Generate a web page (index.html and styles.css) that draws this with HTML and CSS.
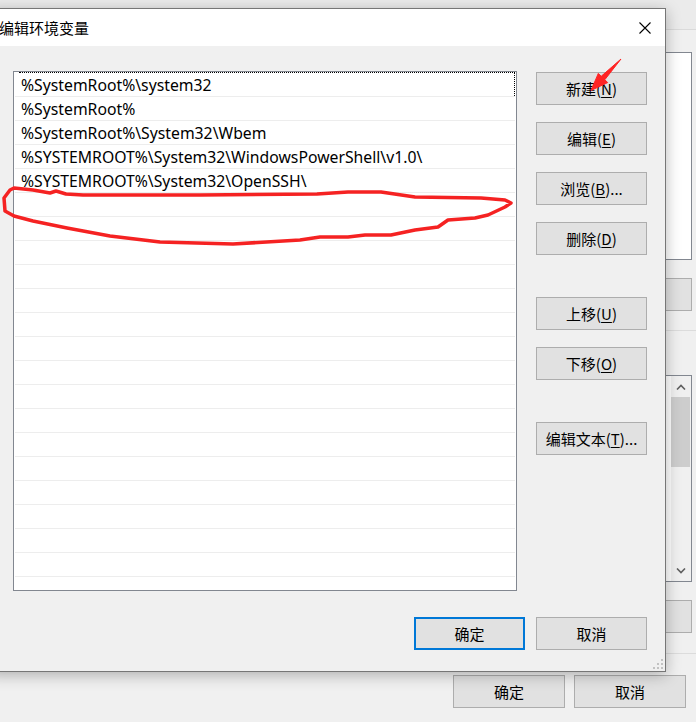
FILE: index.html
```html
<!DOCTYPE html>
<html lang="zh-CN">
<head>
<meta charset="utf-8">
<title>编辑环境变量</title>
<link rel="stylesheet" href="styles.css">
</head>
<body>
<div class="desktop">
  <div class="bg-window">
    <div class="bg-titlebar"></div>
    <div class="bg-list bg-list-top"></div>
    <div class="bg-btn"></div>
    <div class="bg-sep"></div>
    <div class="bg-list bg-list-bottom">
      <div class="scrollbar">
        <div class="sb-arrow">
          <svg width="10" height="6" viewBox="0 0 10 6"><path d="M1 5.5 L5 1.5 L9 5.5" fill="none" stroke="#606060" stroke-width="1.6"/></svg>
        </div>
        <div class="sb-thumb"></div>
        <div class="sb-track"></div>
        <div class="sb-arrow">
          <svg width="10" height="6" viewBox="0 0 10 6"><path d="M1 0.5 L5 4.5 L9 0.5" fill="none" stroke="#606060" stroke-width="1.6"/></svg>
        </div>
      </div>
    </div>
    <div class="bg-btn"></div>
    <div class="bg-sep"></div>
    <div class="bg-footer">
      <button class="btn">确定</button>
      <button class="btn">取消</button>
    </div>
  </div>

  <div class="dialog">
    <div class="titlebar">
      <span class="title">编辑环境变量</span>
      <span class="close">
        <svg width="12" height="12" viewBox="0 0 12 12"><path d="M0.5 0.5 L11.5 11.5 M11.5 0.5 L0.5 11.5" stroke="#000" stroke-width="1.1" fill="none"/></svg>
      </span>
    </div>
    <div class="dialog-body">
      <div class="main">
        <div class="listbox">
          <div class="row focused">%SystemRoot%\system32</div>
          <div class="row">%SystemRoot%</div>
          <div class="row">%SystemRoot%\System32\Wbem</div>
          <div class="row">%SYSTEMROOT%\System32\WindowsPowerShell\v1.0\</div>
          <div class="row">%SYSTEMROOT%\System32\OpenSSH\</div>
          <div class="row"></div>
          <div class="row"></div>
          <div class="row"></div>
          <div class="row"></div>
          <div class="row"></div>
          <div class="row"></div>
          <div class="row"></div>
          <div class="row"></div>
          <div class="row"></div>
          <div class="row"></div>
          <div class="row"></div>
          <div class="row"></div>
          <div class="row"></div>
          <div class="row"></div>
          <div class="row"></div>
          <div class="row"></div>
          <div class="row"></div>
        </div>
        <div class="side">
          <div class="group">
            <button class="btn">新建(<u>N</u>)</button>
            <button class="btn">编辑(<u>E</u>)</button>
            <button class="btn">浏览(<u>B</u>)...</button>
            <button class="btn">删除(<u>D</u>)</button>
          </div>
          <div class="group">
            <button class="btn">上移(<u>U</u>)</button>
            <button class="btn">下移(<u>O</u>)</button>
          </div>
          <div class="group">
            <button class="btn">编辑文本(<u>T</u>)...</button>
          </div>
        </div>
      </div>
      <div class="footer">
        <button class="btn default">确定</button>
        <button class="btn">取消</button>
      </div>
    </div>
    <div class="grip">
      <span></span><span></span><span></span><span></span><span></span><span></span><span></span><span></span><span></span>
    </div>
  </div>

  <svg class="annotation" width="696" height="722" viewBox="0 0 696 722">
    <path d="M10 190 L14 188 L33 190 L50 193 L56 191 L66 194 L83 195 L200 195 L317 194 L348 192 L381 192 L415 197 L481 198 L505 200 L511 203 L505 207 L488 215 L475 218 L448 220 L438 227 L415 230 L391 235 L365 235 L348 237 L320 237 L300 240 L233 244 L160 242 L110 236 L67 228 L33 221 L14 216 L5 211 L4 198 Z" fill="none" stroke="#f52222" stroke-width="3.5" stroke-linejoin="round" stroke-linecap="round"/>
    <path d="M621 59 L604.8 79.7 L607.7 82.6 L591 90.5 L598.3 73.4 L601.2 76.3 Z" fill="#ff2424" stroke="#ff2424" stroke-width="1" stroke-linejoin="round"/>
  </svg>
</div>
</body>
</html>
```
FILE: styles.css
```css
* { box-sizing: border-box; }

html, body {
  margin: 0;
  padding: 0;
}

body {
  width: 696px;
  height: 722px;
  overflow: hidden;
  background: #f0f0f0;
  font-family: "Noto Sans", "Noto Sans CJK SC", sans-serif;
  color: #000;
}

.desktop {
  position: relative;
  width: 696px;
  height: 722px;
  overflow: hidden;
}

/* ---------- background window ---------- */
.bg-window {
  width: 696px;
  height: 722px;
  display: flex;
  flex-direction: column;
  align-items: flex-end;
  padding-right: 4px;
  background: #f0f0f0;
}

.bg-titlebar {
  align-self: stretch;
  height: 30px;
  background: #ebebeb;
  border-bottom: 1px solid #dadada;
  margin-right: -4px;
}

.bg-list {
  width: 420px;
  background: #fff;
  border: 1px solid #828790;
}

.bg-list-top {
  margin-top: 22px;
  height: 208px;
}

.bg-btn {
  width: 112px;
  height: 33px;
  margin-top: 18px;
  background: #e1e1e1;
  border: 1px solid #adadad;
}

.bg-sep {
  align-self: stretch;
  height: 1px;
  background: #dcdcdc;
  margin-top: 19px;
  margin-right: -4px;
}

.bg-list-bottom {
  margin-top: 44px;
  height: 207px;
  display: flex;
  justify-content: flex-end;
}

.bg-list-bottom + .bg-btn { margin-top: 18px; }
.bg-list-bottom + .bg-btn + .bg-sep { margin-top: 20px; }

.scrollbar {
  width: 20px;
  height: 100%;
  background: #f0f0f0;
  display: flex;
  flex-direction: column;
}

.sb-arrow {
  height: 21px;
  display: flex;
  align-items: center;
  justify-content: center;
}

.sb-thumb {
  height: 70px;
  margin: 0 1px 0 0;
  background: #cdcdcd;
}

.sb-track { flex: 1; }

.bg-footer {
  align-self: stretch;
  margin-top: 21px;
  display: flex;
  justify-content: flex-end;
  gap: 9px;
  padding-right: 6px;
}

.bg-footer .btn { width: 112px; }

/* ---------- buttons ---------- */
.btn {
  width: 111px;
  height: 33px;
  padding: 0;
  margin: 0;
  background: #e1e1e1;
  border: 1px solid #adadad;
  border-radius: 0;
  font-family: "Noto Sans CJK SC", "Noto Sans", sans-serif;
  font-size: 15px;
  color: #000;
  display: flex;
  align-items: center;
  justify-content: center;
  line-height: 1;
}

.btn u {
  text-decoration-thickness: 1px;
  text-underline-offset: 2px;
}

.btn.default {
  border: 2px solid #0078d7;
}

/* ---------- dialog ---------- */
.dialog {
  position: absolute;
  top: 8px;
  left: -12px;
  width: 678px;
  border: 1px solid #767676;
  background: #f0f0f0;
  box-shadow: 0 3px 14px rgba(0, 0, 0, 0.28);
}

.titlebar {
  height: 37px;
  background: #fff;
  display: flex;
  align-items: center;
  padding-left: 10px;
}

.title {
  font-family: "Noto Sans CJK SC", sans-serif;
  font-size: 15px;
  line-height: 1;
  color: #000;
}

.close {
  margin-left: auto;
  width: 40px;
  height: 37px;
  display: flex;
  align-items: center;
  justify-content: center;
}

.dialog-body {
  padding: 25px 18px 21px 24px;
}

.main {
  display: flex;
  gap: 19px;
}

.listbox {
  width: 504px;
  height: 520px;
  border: 1px solid #828790;
  background: #fff;
  padding: 1px;
  overflow: hidden;
}

.row {
  position: relative;
  height: 24px;
  border-bottom: 1px solid #ededed;
  padding-left: 6px;
  padding-top: 1px;
  font-family: "Noto Sans", sans-serif;
  font-size: 15.75px;
  line-height: 23px;
  white-space: nowrap;
  color: #000;
}

.row.focused::before {
  content: "";
  position: absolute;
  top: -1px;
  left: 4px;
  right: 0;
  bottom: 0;
  border-top: 1px dotted #000;
  border-right: 1px dotted #000;
}

.side {
  display: flex;
  flex-direction: column;
  padding-top: 1px;
  gap: 42px;
}

.group {
  display: flex;
  flex-direction: column;
  gap: 17px;
}

.footer {
  margin-top: 26px;
  display: flex;
  justify-content: flex-end;
  gap: 11px;
}

.grip {
  position: absolute;
  right: 2px;
  bottom: 2px;
  width: 11px;
  height: 11px;
  display: grid;
  grid-template-columns: repeat(3, 2px);
  grid-template-rows: repeat(3, 2px);
  gap: 2px;
  justify-content: end;
  align-content: end;
}

.grip span { background: #c2c2c2; }
.grip span:nth-child(1),
.grip span:nth-child(2),
.grip span:nth-child(4) { background: transparent; }

.annotation {
  position: absolute;
  top: 0;
  left: 0;
  pointer-events: none;
}
```
